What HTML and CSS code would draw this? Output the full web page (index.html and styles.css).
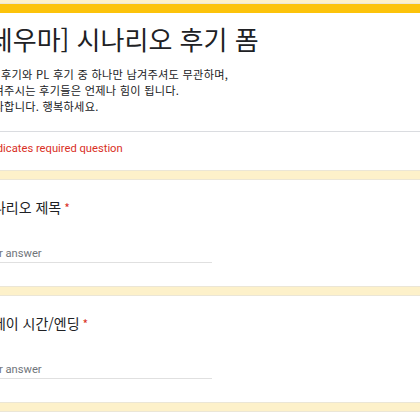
FILE: index.html
```html
<!DOCTYPE html>
<html lang="ko">
<head>
<meta charset="utf-8">
<link rel="stylesheet" href="styles.css">
</head>
<body>
<div class="page">
  <div class="card header">
    <div class="header-main">
      <h1 class="title">[세우마] 시나리오 후기 폼</h1>
      <div class="desc">후기와 PL 후기 중 하나만 남겨주셔도 무관하며,<br>남겨주시는 후기들은 언제나 힘이 됩니다.<br>감사합니다. 행복하세요.</div>
    </div>
    <div class="required-note">* Indicates required question</div>
  </div>
  <div class="card question">
    <div class="q-title">시나리오 제목<span class="star">*</span></div>
    <div class="answer">Your answer</div>
  </div>
  <div class="card question">
    <div class="q-title">플레이 시간/엔딩<span class="star">*</span></div>
    <div class="answer">Your answer</div>
  </div>
  <div class="card question"></div>
</div>
</body>
</html>
```
FILE: styles.css
```css
html, body {
  margin: 0;
  padding: 0;
  background: #fdf1ca;
  overflow: hidden;
}
.page {
  margin-left: -39px;
  width: 512px;
  padding-top: 4px;
  display: flex;
  flex-direction: column;
  gap: 10px;
}
.card {
  background: #fff;
  border-radius: 7px;
  box-shadow: 0 0 0 1px #ebe6d6;
}
.header {
  border-top: 9px solid #fcc30b;
}
.header-main {
  padding: 10px 19px 17px;
  border-bottom: 1px solid #dadce0;
}
.title {
  margin: 0;
  font-family: "Noto Sans CJK KR", "Noto Sans", sans-serif;
  font-weight: 400;
  font-size: 26px;
  line-height: 32px;
  color: #202124;
}
.desc {
  margin-top: 11px;
  padding-left: 3px;
  text-indent: 18px;
  font-family: "Noto Sans CJK KR", "Noto Sans", sans-serif;
  font-size: 11.2px;
  letter-spacing: 0.25px;
  line-height: 16px;
  color: #202124;
}
.required-note {
  padding: 9px 19px 13px;
  font-family: Roboto, "Noto Sans", sans-serif;
  font-size: 11.2px;
  line-height: 16px;
  color: #d93025;
}
.question {
  padding: 17px 19px 23px;
}
.q-title {
  font-family: "Noto Sans CJK KR", "Noto Sans", sans-serif;
  font-size: 14px;
  line-height: 20px;
  color: #202124;
}
.star {
  color: #d93025;
  margin-left: 3px;
  font-size: 12px;
}
.answer {
  margin-top: 28px;
  width: 232px;
  font-family: Roboto, "Noto Sans", sans-serif;
  font-size: 11.2px;
  line-height: 16px;
  color: #70757a;
  border-bottom: 1px solid #e0e0e0;
}
```
